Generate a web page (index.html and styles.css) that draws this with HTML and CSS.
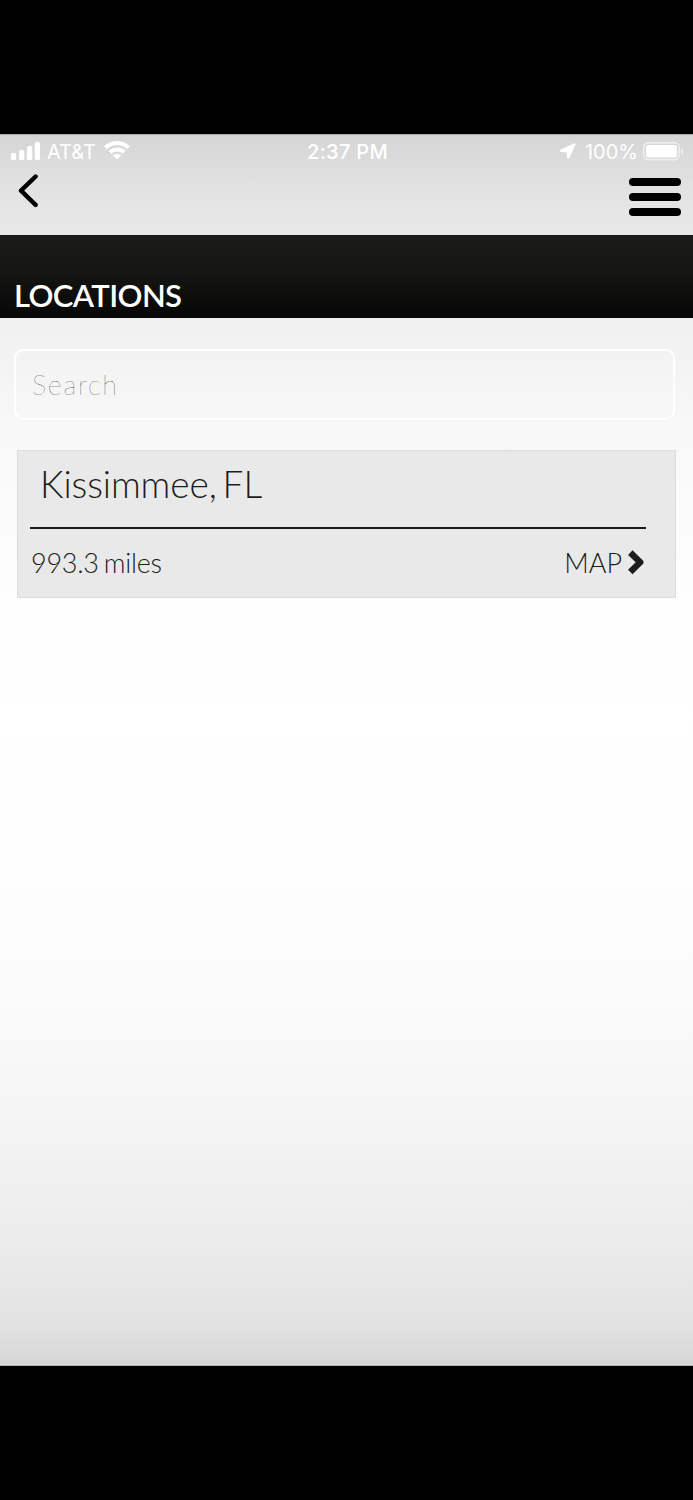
FILE: index.html
```
<!DOCTYPE html>
<html lang="en">
<head>
  <meta charset="UTF-8" />
  <meta name="viewport" content="width=device-width, initial-scale=1" />
  <title>Locations</title>
  <link rel="stylesheet" href="styles.css">
</head>
<body>
  <div class="screen">
    <header class="top">
      <div class="status-bar">
        <div class="carrier">
          <svg class="signal" width="29" height="18" viewBox="0 0 29 18" fill="#fff">
            <rect x="0" y="11" width="5.2" height="7" rx="1.6" />
            <rect x="8" y="8" width="5.2" height="10" rx="1.6" />
            <rect x="16" y="4" width="5.2" height="14" rx="1.6" />
            <rect x="23.8" y="0" width="5.2" height="18" rx="1.6" />
          </svg>
          <span class="carrier-name">AT&amp;T</span>
          <svg class="wifi" width="26" height="19" viewBox="0 0 26 19" fill="none" stroke="#fff" stroke-width="4">
            <path d="M1.5 6.7C8 .4 18 .4 24.5 6.7" />
            <path d="M5.8 11.3C9.9 7.5 16.1 7.5 20.2 11.3" />
            <path d="M13 18.6L8.8 14.5C11.1 12.5 14.9 12.5 17.2 14.5Z" fill="#fff" stroke="none" />
          </svg>
        </div>
        <div class="time">2:37 PM</div>
        <div class="power">
          <svg class="arrow" width="16" height="16" viewBox="0 0 16 16" fill="#fff">
            <path d="M14.2.2.8 6.4C-.4 7 0 8.9 1.1 8.9L6.6 9.3 7 14.6C7.1 16 8.8 16.2 9.4 15L15.6 1.5C15.9.6 15.1-.1 14.2.2Z" />
          </svg>
          <span class="percent">100%</span>
          <svg class="battery" width="41" height="19" viewBox="0 0 41 19">
            <rect x=".8" y=".8" width="35.4" height="17" rx="4.5" fill="none" stroke="#f0f0f0" stroke-width="1.4" />
            <rect x="3" y="3" width="31" height="12.6" rx="2.5" fill="#fff" />
            <path d="M38 6.3C40.7 7 40.7 11.8 38 12.5Z" fill="#efefef" />
          </svg>
        </div>
      </div>
      <nav class="nav">
        <svg class="back" width="21" height="34" viewBox="0 0 21 34" fill="none" stroke="#000" stroke-width="4.4" stroke-linecap="round" stroke-linejoin="round">
          <path d="M18.6 2.5 4 16.7 18.6 30.9" />
        </svg>
        <div class="menu">
          <span></span>
          <span></span>
          <span></span>
        </div>
      </nav>
    </header>

    <h1 class="title">LOCATIONS</h1>

    <main class="content">
      <input class="search" type="text" placeholder="Search" />

      <section class="location">
        <h2 class="city">Kissimmee, FL</h2>
        <div class="details">
          <span class="distance">993.3 miles</span>
          <span class="map">
            <span class="map-label">MAP</span>
            <svg width="17" height="25" viewBox="0 0 17 25" fill="none" stroke="#1c1c1c" stroke-width="6.4" stroke-linejoin="round">
              <path d="M2.3 2.6 12.2 12.3 2.3 22" />
            </svg>
          </span>
        </div>
      </section>
    </main>
  </div>
</body>
</html>
```
FILE: styles.css
```
* {
  box-sizing: border-box;
}
body {
  margin: 0;
  padding: 134px 0;
  background: #000;
  font-family: Lato, sans-serif;
}
svg {
  display: block;
  flex: none;
}
.screen {
  height: 1232px;
  background: linear-gradient(#d5d5d5 0, #e1e1e1 50px, #e9e9e9 100px, #f0f0f0 185px, #f8f8f8 290px, #fdfdfd 430px, #fff 580px, #fefefe 730px, #fbfbfb 860px, #f5f5f5 980px, #ebebeb 1116px, #e2e2e2 1190px, #d6d6d6 1232px);
  border-bottom: 1px solid #b5b5b5;
}
.top {
  height: 101px;
  border-top: 1px solid #aaa;
}
.status-bar {
  display: grid;
  grid-template-columns: 1fr auto 1fr;
  align-items: center;
  height: 33px;
  padding: 0 9px 0 11px;
  color: #fff;
  font-family: Inter, sans-serif;
  font-size: 20px;
}
.carrier,
.power {
  display: flex;
  align-items: center;
}
.signal,
.wifi,
.arrow {
  margin-top: -2px;
}
.carrier-name {
  margin: 0 8px 0 7px;
  font-size: 20px;
}
.time {
  font-weight: 500;
  letter-spacing: 0.3px;
}
.power {
  justify-content: flex-end;
}
.arrow {
  margin-right: 9px;
}
.percent {
  margin-right: 5px;
}
.nav {
  display: flex;
  justify-content: space-between;
  padding: 6px 12px 0 17px;
}
.menu {
  display: flex;
  flex-direction: column;
  gap: 7px;
  padding-top: 4px;
}
.menu span {
  width: 52px;
  height: 8px;
  border-radius: 4px;
  background: #000;
}
.title {
  height: 83px;
  margin: 0;
  padding: 41px 0 0 14px;
  background: linear-gradient(#1c1c1a, #151512 45%, #070707);
  color: #fff;
  font-size: 31px;
  font-weight: 600;
  letter-spacing: -0.6px;
  line-height: 38px;
}
.content {
  padding: 31px 17px 0;
}
.search {
  display: block;
  width: 661px;
  height: 71px;
  margin: 0 0 30px -3px;
  padding: 0 16px;
  border: 2px solid #fff;
  border-radius: 9px;
  background: transparent;
  font-family: Lato, sans-serif;
  font-size: 27px;
  font-weight: 200;
  letter-spacing: 1.7px;
}
.search::placeholder {
  color: #222;
}
.location {
  height: 148px;
  padding: 0 29px 0 12px;
  border: 1px solid #dcdcdc;
  background: #e9e9e9;
  color: #1c1c1c;
  font-weight: 300;
}
.city {
  height: 78px;
  margin: 0;
  padding: 10px 0 0 10px;
  border-bottom: 2px solid #1c1c1c;
  font-size: 37px;
  font-weight: 300;
  letter-spacing: -0.1px;
  line-height: 46px;
  word-spacing: -4px;
}
.details {
  display: flex;
  justify-content: space-between;
  align-items: center;
  height: 67px;
  padding: 0 1px;
  font-size: 27px;
}
.distance {
  letter-spacing: -0.25px;
  word-spacing: -2px;
}
.map {
  display: flex;
  align-items: center;
  gap: 6px;
}
```
